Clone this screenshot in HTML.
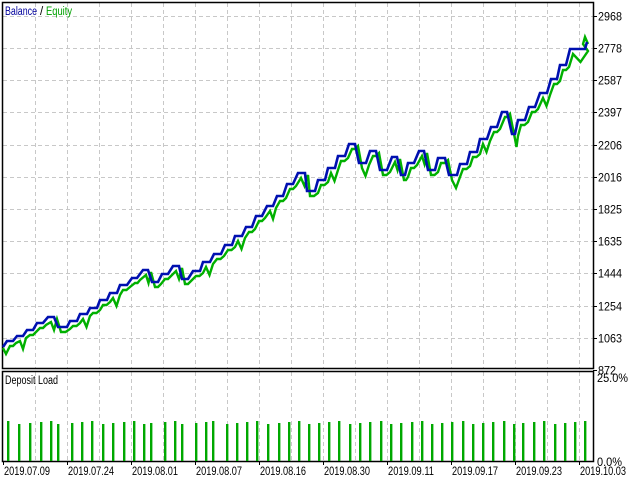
<!DOCTYPE html>
<html><head><meta charset="utf-8"><style>
html,body{margin:0;padding:0;background:#fff;width:640px;height:480px;overflow:hidden}
svg{display:block}
text{font-family:"Liberation Sans","DejaVu Sans",sans-serif;font-size:11.5px}
</style></head><body>
<svg id="s" width="640" height="480" xmlns="http://www.w3.org/2000/svg">
<g id="grid" stroke="#c8c8c8" stroke-dasharray="4,3" stroke-width="1"></g>
<rect x="2.5" y="2.5" width="591" height="366" fill="none" stroke="#000" stroke-width="1.5"/>
<rect x="2.5" y="371.5" width="591" height="90" fill="none" stroke="#000" stroke-width="1.5"/>
<g id="bars" fill="#00a800"></g>
<polyline id="eq" fill="none" stroke="#00b000" stroke-width="2.4" stroke-linejoin="miter"/>
<polyline id="bal" fill="none" stroke="#0010b0" stroke-width="2.6" stroke-linejoin="miter"/>
<text x="5" y="15" fill="#00009c" textLength="32" lengthAdjust="spacingAndGlyphs">Balance</text><text x="40" y="15" fill="#000">/</text><text x="46" y="15" fill="#00a000" textLength="26" lengthAdjust="spacingAndGlyphs">Equity</text>
<text x="5" y="384" fill="#000" textLength="53" lengthAdjust="spacingAndGlyphs">Deposit Load</text>
<g id="labels" fill="#000"></g>
</svg>
<script>
var NS="http://www.w3.org/2000/svg",g=document.getElementById('grid'),L=document.getElementById('labels');
function el(p,t,a,txt){var e=document.createElementNS(NS,t);for(var k in a)e.setAttribute(k,a[k]);if(txt)e.textContent=txt;p.appendChild(e);return e;}
for(var x=35.5;x<593;x+=32){el(g,'line',{x1:x,y1:3,x2:x,y2:368});el(g,'line',{x1:x,y1:372,x2:x,y2:461});}
var ys=[16,48,80,112,145,177,209,241,273,306,338];
ys.forEach(function(y){el(g,'line',{x1:3,y1:y+.5,x2:593,y2:y+.5});});
var vals=["2968","2778","2587","2397","2206","2016","1825","1635","1444","1254","1063","872"];
vals.forEach(function(v,i){var y=i<11?ys[i]:370;el(L,'line',{x1:593,y1:y+.5,x2:597,y2:y+.5,stroke:'#000'});el(L,'text',{x:598,y:y+4.5,textLength:v.length*6,lengthAdjust:'spacingAndGlyphs'},v);});
el(L,'text',{x:597,y:382,textLength:31,lengthAdjust:'spacingAndGlyphs'},"25.0%");el(L,'text',{x:597,y:466,textLength:25,lengthAdjust:'spacingAndGlyphs'},"0.0%");
var d=["2019.07.09","2019.07.24","2019.08.01","2019.08.07","2019.08.16","2019.08.30","2019.09.11","2019.09.17","2019.09.23","2019.10.03"];
d.forEach(function(t,i){var x=3+64*i;el(L,'line',{x1:x+.5,y1:461,x2:x+.5,y2:465,stroke:'#000'});el(L,'text',{x:x+1,y:475,textLength:46,lengthAdjust:'spacingAndGlyphs'},t);});
var bx=[8,19,30,41,51,58,72,82,92,103,113,124,134,144,151,165,175,182,196,206,213,227,237,247,257,268,279,289,299,309,319,329,339,350,360,370,381,391,401,412,422,432,442,452,463,473,483,493,504,514,523,534,544,555,565,575,585];
var B=document.getElementById('bars');
bx.forEach(function(x,i){var t=421+((i*7)%4);el(B,'rect',{x:x-1,y:t,width:2.4,height:461-t});});
var b=[[3,347],[7,341],[13,341],[17,336],[23,336],[27,330],[33,330],[37,323],[43,323],[48,317],[54,317],[58,327],[67,327],[70,321],[77,321],[80,314],[87,314],[90,308],[97,308],[100,300],[107,300],[110,293],[117,293],[120,285],[127,285],[132,278],[137,278],[143,270],[148,270],[152,282],[158,282],[162,274],[168,274],[173,266],[179,266],[182,279],[188,279],[193,271],[200,271],[203,262],[210,262],[214,254],[221,254],[225,245],[232,245],[235,236],[242,236],[246,227],[252,227],[256,216],[262,216],[267,206],[273,206],[277,196],[283,196],[287,184],[293,184],[298,173],[305,173],[307,191],[315,191],[318,180],[325,180],[328,168],[335,168],[338,156],[345,156],[349,144],[355,144],[359,163],[366,163],[370,151],[376,151],[380,170],[387,170],[392,157],[397,157],[401,175],[405,175],[408,163],[414,163],[419,151],[424,151],[428,170],[435,170],[438,158],[445,158],[449,175],[457,175],[460,164],[467,164],[470,152],[477,152],[480,139],[487,139],[491,127],[497,127],[502,112],[507,112],[512,134],[515,134],[518,120],[525,120],[529,107],[535,107],[540,93],[547,93],[551,79],[557,79],[560,65],[566,65],[570,49],[585,49],[587,42]];
document.getElementById('bal').setAttribute('points',b.map(function(p){return p.join(',')}).join(' '));
var e=[];
for(var i=0;i<b.length-1;i++){var p=b[i],q=b[i+1];
 if(p[1]==q[1]){e.push([p[0]+3,p[1]+5]);var m=(p[0]+q[0])/2+3;e.push([m,p[1]+(i%3==0?13:5)]);}
 else e.push([p[0]+3,p[1]+2]);}
e.unshift([3,348]);e[1]=[6,354];e.push([583,44]);e.push([585,37]);e.push([588,44]);
document.getElementById('eq').setAttribute('points',e.map(function(p){return p.join(',')}).join(' '));
</script>
</body></html>
